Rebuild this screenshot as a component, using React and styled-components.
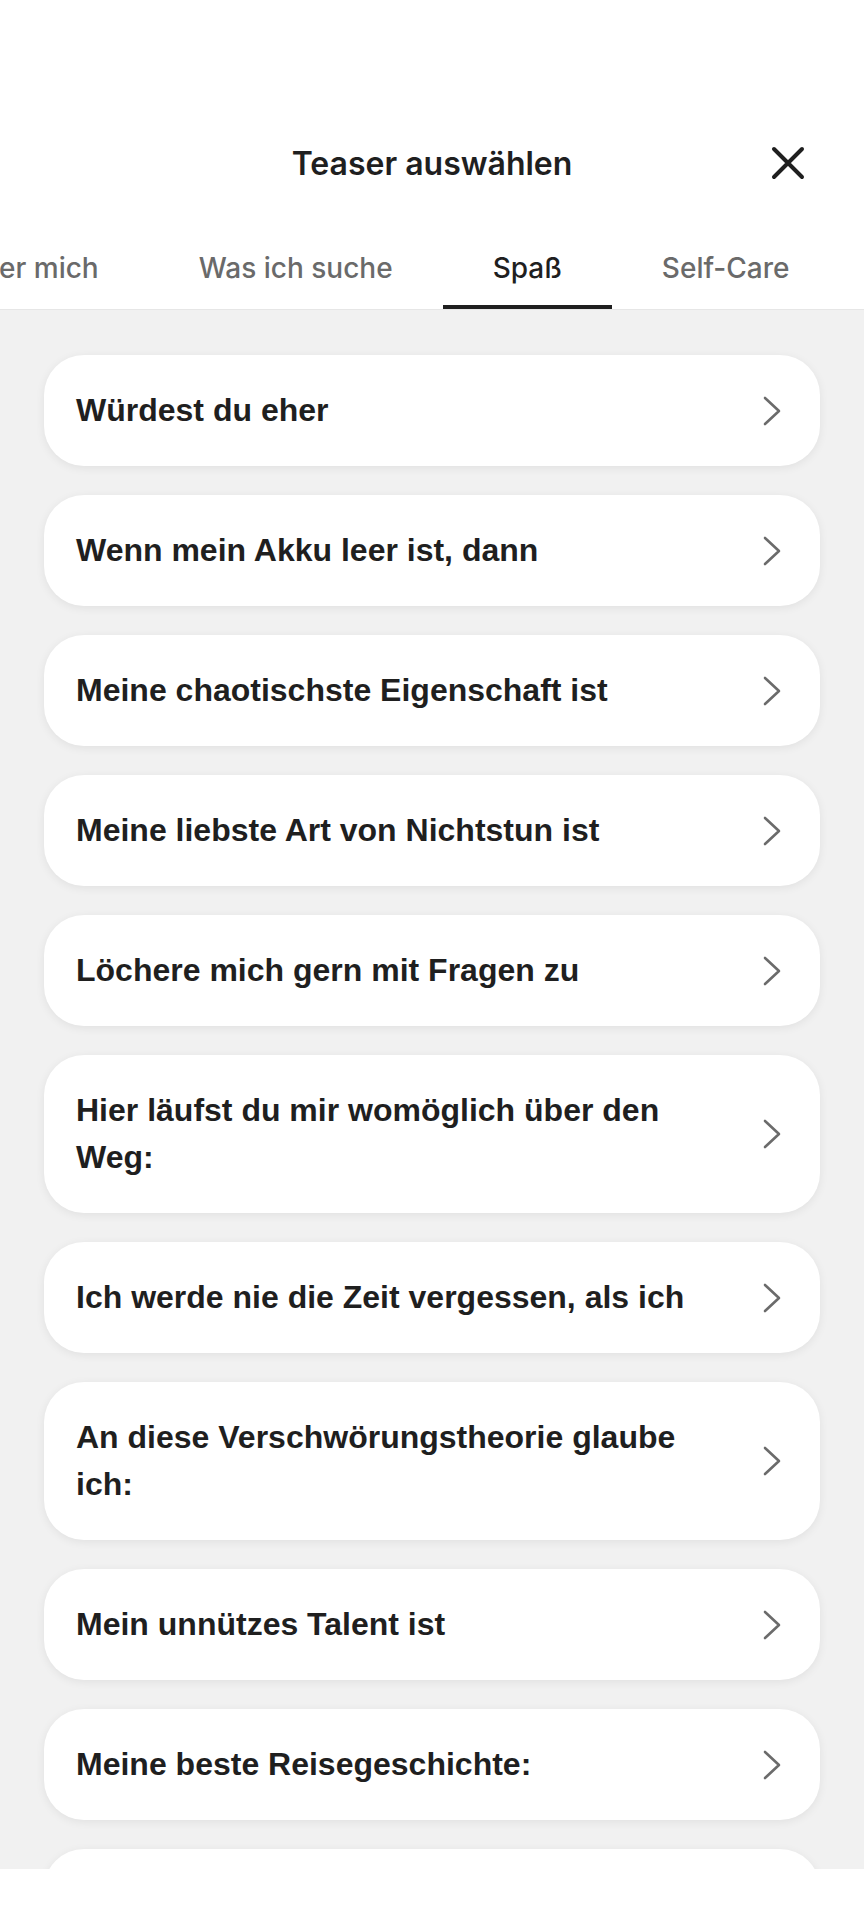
import React, { useLayoutEffect, useRef } from 'react';
import styled, { createGlobalStyle } from 'styled-components';

const GlobalStyle = createGlobalStyle`
  html, body {
    margin: 0;
    padding: 0;
    background: #ffffff;
  }
  body {
    font-family: Inter, "Noto Sans", "Liberation Sans", sans-serif;
    color: #222222;
  }
  * {
    box-sizing: border-box;
  }
`;

const Sheet = styled.div`
  display: flex;
  flex-direction: column;
  width: 864px;
  height: 1920px;
  background: #ffffff;
  overflow: hidden;
`;

const TitleRow = styled.header`
  display: grid;
  grid-template-columns: 1fr auto 1fr;
  align-items: center;
  height: 66px;
  margin-top: 130px;
  padding: 0 59px;
`;

const Title = styled.h1`
  grid-column: 2;
  margin: 0;
  font-size: 32px;
  font-weight: 600;
  color: #1f1f1f;
`;

const CloseButton = styled.button`
  grid-column: 3;
  justify-self: end;
  display: flex;
  align-items: center;
  justify-content: center;
  width: 34px;
  height: 34px;
  padding: 0;
  border: 0;
  background: none;
  color: #1f1f1f;
  cursor: pointer;
`;

const TabStrip = styled.nav`
  display: flex;
  margin-top: 28px;
  overflow: hidden;
  border-bottom: 1px solid #e6e6e6;
  flex-shrink: 0;
`;

const Tab = styled.button`
  position: relative;
  flex-shrink: 0;
  height: 85px;
  padding: 3px 50px 0;
  border: 0;
  background: none;
  font-family: inherit;
  font-size: 28px;
  font-weight: 500;
  white-space: nowrap;
  color: ${(p) => (p.$active ? '#1f1f1f' : '#6a6a6a')};
  cursor: pointer;

  &::after {
    content: '';
    position: absolute;
    left: 0;
    right: 0;
    bottom: 0;
    height: 4px;
    background: ${(p) => (p.$active ? '#1f1f1f' : 'transparent')};
  }
`;

const List = styled.main`
  flex: 1;
  display: flex;
  flex-direction: column;
  gap: 29px;
  padding: 45px 44px 0;
  background: #f1f1f1;
  overflow: hidden;
`;

const Card = styled.button`
  display: flex;
  align-items: center;
  justify-content: space-between;
  gap: 24px;
  flex-shrink: 0;
  width: 100%;
  padding: 32px 39px 32px 32px;
  border: 0;
  border-radius: 40px;
  background: #ffffff;
  box-shadow: 0 2px 10px rgba(0, 0, 0, 0.07);
  text-align: left;
  cursor: pointer;
`;

const CardText = styled.span`
  max-width: 640px;
  font-family: inherit;
  font-size: 32px;
  line-height: 47px;
  font-weight: 600;
  color: #1f1f1f;
`;

const Chevron = styled.svg`
  flex-shrink: 0;
  width: 18px;
  height: 30px;
  color: #6b6b6b;
`;

const BottomBar = styled.footer`
  height: 51px;
  flex-shrink: 0;
  background: #ffffff;
`;

const tabs = ['Über mich', 'Was ich suche', 'Spaß', 'Self-Care', 'Werte'];

const teasers = [
  'Würdest du eher',
  'Wenn mein Akku leer ist, dann',
  'Meine chaotischste Eigenschaft ist',
  'Meine liebste Art von Nichtstun ist',
  'Löchere mich gern mit Fragen zu',
  'Hier läufst du mir womöglich über den Weg:',
  'Ich werde nie die Zeit vergessen, als ich',
  'An diese Verschwörungstheorie glaube ich:',
  'Mein unnützes Talent ist',
  'Meine beste Reisegeschichte:',
  'Mein Lieblingsfilm aller Zeiten',
];

function Tabs({ active }) {
  const stripRef = useRef(null);
  const activeRef = useRef(null);

  // keep the selected tab scrolled into its place in the strip
  useLayoutEffect(() => {
    if (stripRef.current && activeRef.current) {
      stripRef.current.scrollLeft = activeRef.current.offsetLeft - 443;
    }
  }, [active]);

  return (
    <TabStrip ref={stripRef}>
      {tabs.map((label) => (
        <Tab
          key={label}
          ref={label === active ? activeRef : null}
          $active={label === active}
        >
          {label}
        </Tab>
      ))}
    </TabStrip>
  );
}

function TeaserCard({ text }) {
  return (
    <Card>
      <CardText>{text}</CardText>
      <Chevron viewBox="0 0 18 30" fill="none">
        <path
          d="M2 2L16 15L2 28"
          stroke="currentColor"
          strokeWidth="2.6"
          strokeLinecap="round"
          strokeLinejoin="round"
        />
      </Chevron>
    </Card>
  );
}

export default function App() {
  return (
    <>
      <GlobalStyle />
      <Sheet>
        <TitleRow>
          <Title>Teaser auswählen</Title>
          <CloseButton aria-label="Schließen">
            <svg width="34" height="34" viewBox="0 0 34 34" fill="none">
              <path
                d="M3 3L31 31M31 3L3 31"
                stroke="currentColor"
                strokeWidth="4"
                strokeLinecap="round"
              />
            </svg>
          </CloseButton>
        </TitleRow>
        <Tabs active="Spaß" />
        <List>
          {teasers.map((t) => (
            <TeaserCard key={t} text={t} />
          ))}
        </List>
        <BottomBar />
      </Sheet>
    </>
  );
}
